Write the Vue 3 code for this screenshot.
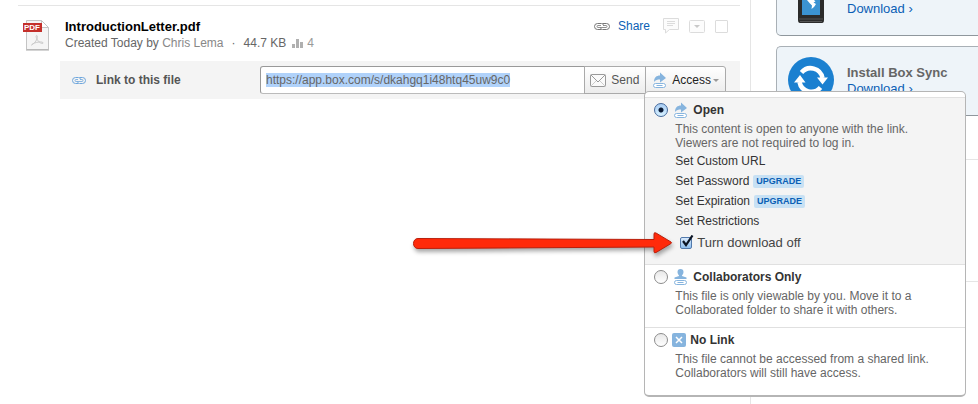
<script setup>
import { onMounted, ref } from 'vue'

const url = ref('https://app.box.com/s/dkahgq1i48htq45uw9c0')
const urlField = ref(null)
const access = ref('open')
const downloadOff = ref(true)
const rowSelected = ref(false)
const settings = [
  { label: 'Set Custom URL', upgrade: false },
  { label: 'Set Password', upgrade: true },
  { label: 'Set Expiration', upgrade: true },
  { label: 'Set Restrictions', upgrade: false }
]

onMounted(() => {
  urlField.value.focus()
  urlField.value.select()
})
</script>

<template>
  <div class="page">
    <main class="files">
      <article class="file">
        <svg class="pdf" width="28" height="32" viewBox="0 0 28 32" aria-hidden="true">
          <path d="M4.500 1.500H19.500L26.500 8.500V30.500H4.500Z" fill="#f5f5f5" stroke="#c4c4c4" />
          <path d="M4 31H27" stroke="#aaa" />
          <path d="M19.500 1.500V8.500H26.500Z" fill="#fff" stroke="#c4c4c4" />
          <path d="M9.500 26C13 24 15.500 20.500 15.300 17.500C15 15.500 13.700 16.500 14.300 18.500C15.300 21.500 18 24.500 20.500 24.500C22.500 24 20 22.500 17 23C14 23.300 10.500 24.500 9.500 26Z" fill="none" stroke="#c9c9c9" />
          <rect x="1" y="4" width="19" height="9" fill="#c4302b" />
          <text x="2" y="11" class="pdf-label">PDF</text>
        </svg>
        <div class="info">
          <h2 class="name">IntroductionLetter.pdf</h2>
          <p class="meta">
            <span>Created Today by <a href="#" class="owner">Chris Lema</a></span>
            <span class="dot">·</span>
            <span class="size">44.7 KB</span>
            <svg width="11" height="9" viewBox="0 0 11 9" aria-hidden="true"><path d="M0 5h3v4H0zM4 0h3v9H4zM8 3h3v6H8z" fill="#b0b0b0" /></svg>
            <span class="views">4</span>
          </p>
        </div>
        <div class="tools">
          <svg width="16" height="7" viewBox="0 0 16 7" fill="none" stroke="#777" aria-hidden="true">
            <path d="M7.500.5H3.500a3 3 0 0 0 0 6H7.500M8.500.5h4a3 3 0 0 1 0 6H8.500" /><path d="M7 2.500H4a1 1 0 0 0 0 2h8a1 1 0 0 0 0-2H9M7.500.5q2 0 2 2M8.500 6.500q-2 0-2-2" stroke-width=".8" />
          </svg>
          <a href="#" class="share">Share</a>
          <button class="tool" aria-label="Comment">
            <svg width="16" height="16" viewBox="0 0 16 16" fill="none" stroke="#dcdcdc"><path d="M.5.5h15v11H6.500L2.500 15v-3.500h-2Z" fill="#fcfcfc" /><path d="M4 3.500h8M4 5.500h8M4 7.500h6" /></svg>
          </button>
          <button class="tool" aria-label="More actions">
            <svg width="16" height="13" viewBox="0 0 16 13"><rect x=".5" y=".5" width="15" height="12" rx="1" fill="#fcfcfc" stroke="#dcdcdc" /><path d="M5 5h6L8 8z" fill="#c8c8c8" /></svg>
          </button>
          <input v-model="rowSelected" type="checkbox" class="pick" aria-label="Select file" />
        </div>
      </article>

      <section class="linkbar">
        <svg width="14" height="7" viewBox="0 0 14 7" fill="none" stroke="#6ea6dc" aria-hidden="true">
          <path d="M6.500.5h-3a3 3 0 0 0 0 6h3M7.500.5h3a3 3 0 0 1 0 6h-3" /><path d="M6 2.500H4a1 1 0 0 0 0 2h6a1 1 0 0 0 0-2H8M6.500.5q2 0 2 2M7.500 6.500q-2 0-2-2" stroke-width=".8" />
        </svg>
        <label for="link" class="linklabel">Link to this file</label>
        <div class="group">
          <input id="link" ref="urlField" v-model="url" type="text" class="url" spellcheck="false" />
          <button class="btn">
            <svg width="16" height="13" viewBox="0 0 16 13" fill="#fafafa" stroke="#999" aria-hidden="true"><rect x=".5" y=".5" width="15" height="12" rx="1" /><path d="M1 1l7 7 7-7" fill="none" /><path d="M1 12l5-5M15 12l-5-5" fill="none" stroke="#ccc" /></svg>
            Send
          </button>
          <div class="access">
            <button class="btn last" aria-expanded="true">
              <svg width="13" height="16" viewBox="0 0 13 16" aria-hidden="true"><path d="M1 10C1 5.500 3.500 3.500 7 3.500V.5L13 6 7 10.500V7.500C4.500 7.500 2.500 8 1 10Z" fill="#86b4de" /><rect x=".5" y="11.500" width="12" height="4" rx="2" fill="#fff" stroke="#86b4de" /><path d="M3.500 13.500h6" stroke="#86b4de" /></svg>
              <span>Access</span>
              <svg class="caret" width="6" height="3" viewBox="0 0 6 3" aria-hidden="true"><path d="M0 0h6L3 3z" fill="#999" /></svg>
            </button>

            <div class="popup">
              <section class="option open">
                <label class="choice">
                  <input v-model="access" type="radio" name="access" value="open" />
                  <svg width="13" height="16" viewBox="0 0 13 16" aria-hidden="true"><path d="M1 10C1 5.500 3.500 3.500 7 3.500V.5L13 6 7 10.500V7.500C4.500 7.500 2.500 8 1 10Z" fill="#86b4de" /><rect x=".5" y="11.500" width="12" height="4" rx="2" fill="#fff" stroke="#86b4de" /><path d="M3.500 13.500h6" stroke="#86b4de" /></svg>
                  <b>Open</b>
                </label>
                <p class="desc">This content is open to anyone with the link.<br />Viewers are not required to log in.</p>
                <ul class="settings">
                  <li v-for="s in settings" :key="s.label">
                    <a href="#">{{ s.label }}</a>
                    <span v-if="s.upgrade" class="badge">UPGRADE</span>
                  </li>
                </ul>
                <div class="restrict">
                  <label class="download">
                    <span class="tick">
                      <input v-model="downloadOff" type="checkbox" />
                      <svg v-if="downloadOff" class="mark" width="14" height="14" viewBox="0 0 14 14" aria-hidden="true"><path d="M3 6l3 4 6.500-9.500" fill="none" stroke="#0c1626" stroke-width="2.200" /></svg>
                    </span>
                    Turn download off
                  </label>
                  <svg class="arrow" width="264" height="28" viewBox="0 0 264 28" aria-hidden="true">
                    <path d="M8 6.500C2 6.500 2 16.500 8 16.500L244 15V19.500Q244 21.500 246 20.500L261 11.500Q262 11 261 10L246 1Q244 0 244 2V7.500Z" fill="#ff2a0a" stroke="#b91f0c" />
                  </svg>
                </div>
              </section>
              <section class="option collab">
                <label class="choice">
                  <input v-model="access" type="radio" name="access" value="collaborators" />
                  <svg width="13" height="16" viewBox="0 0 13 16" aria-hidden="true"><path d="M6.500 0a3 3 0 0 1 3 3c0 1.500-.8 2.500-1.500 3.500V7l4.500 1.500V10H.5V8.500L5 7V6.500C4.300 5.500 3.500 4.500 3.500 3a3 3 0 0 1 3-3Z" fill="#86b4de" /><rect x=".5" y="11.500" width="12" height="4" rx="2" fill="#fff" stroke="#86b4de" /><path d="M3.500 13.500h6" stroke="#86b4de" /></svg>
                  <b>Collaborators Only</b>
                </label>
                <p class="desc">This file is only viewable by you. Move it to a<br />Collaborated folder to share it with others.</p>
              </section>
              <section class="option nolink">
                <label class="choice tight">
                  <input v-model="access" type="radio" name="access" value="none" />
                  <svg width="14" height="14" viewBox="0 0 14 14" aria-hidden="true"><rect width="14" height="14" rx="2" fill="#86b4de" /><path d="M4 4l6 6M10 4l-6 6" stroke="#fff" stroke-width="1.500" /></svg>
                  <b>No Link</b>
                </label>
                <p class="desc">This file cannot be accessed from a shared link.<br />Collaborators will still have access.</p>
              </section>
            </div>
          </div>
        </div>
      </section>
    </main>

    <aside class="side">
      <section class="card first">
        <svg class="phone" width="28" height="24" viewBox="0 0 28 24" aria-hidden="true">
          <path d="M1 0H27V20Q27 23 25 23H3Q1 23 1 20Z" fill="#2b2b2b" />
          <path d="M2 19H26M3 21.500H25" stroke="#555" />
          <path d="M5 0H23V15H5Z" fill="#3b93d2" />
          <path d="M10 0H17L18.500 1.500 16.500 2.500 19 4 17 7 14.500 9 15 5.500 12.500 3Z" fill="#fff" />
        </svg>
        <a href="#" class="dl">Download ›</a>
      </section>
      <section class="card second">
        <svg class="sync" width="46" height="46" viewBox="0 0 46 46" aria-hidden="true">
          <circle cx="23" cy="23" r="23" fill="#1b80d0" />
          <path d="M13.500 15.500A12 12 0 0 1 34.500 21M32.500 30.500A12 12 0 0 1 11.500 25" fill="none" stroke="#fff" stroke-width="4.500" />
          <path d="M29 20.500H40L34.500 27.500ZM6 25.500H17.500L12 18Z" fill="#fff" />
        </svg>
        <div>
          <h3 class="title">Install Box Sync</h3>
          <a href="#" class="dl">Download ›</a>
        </div>
      </section>
      <div class="block"></div>
      <div class="block low"></div>
    </aside>
  </div>
</template>

<style>
body {
  background: #fff;
}
</style>

<style scoped>
* {
  box-sizing: border-box;
}
.page {
  display: flex;
  min-height: 100vh;
  font: 12px/14px "Liberation Sans", Arial, sans-serif;
  color: #666;
}
h2, h3, p, ul {
  margin: 0;
  padding: 0;
}
a {
  text-decoration: none;
  color: inherit;
}
button {
  font: inherit;
  margin: 0;
}
svg {
  display: block;
  flex: none;
}
.files {
  flex: 1;
  min-width: 0;
  padding: 5px 10px 0 18px;
}
.file {
  display: flex;
  align-items: flex-start;
  height: 56px;
  padding: 13px 4px 0 4px;
  border-top: 1px solid #e5e5e5;
}
.pdf-label {
  font: bold 8px "Liberation Sans", Arial, sans-serif;
  fill: #fff;
}
.info {
  flex: 1;
  padding: 0 0 0 15px;
}
.name {
  font-size: 13px;
  line-height: 16px;
  color: #000;
}
.meta {
  display: flex;
  align-items: center;
  line-height: 16px;
}
.owner {
  color: #888;
}
.dot {
  margin: 0 8px;
}
.size {
  margin-right: 6px;
}
.views {
  margin-left: 4px;
  color: #999;
}
.tools {
  display: flex;
  align-items: center;
  height: 14px;
}
.share {
  margin: 0 13px 0 8px;
  color: #0b5fb5;
}
.tool {
  padding: 0;
  margin-right: 10px;
  border: 0;
  background: none;
}
.pick {
  appearance: none;
  width: 13px;
  height: 13px;
  margin: 0 8px 0 0;
  border: 1px solid #dcdcdc;
  border-radius: 1px;
  background: #fff;
}
.linkbar {
  display: flex;
  align-items: center;
  height: 38px;
  margin-left: 42px;
  padding: 0 14px 0 12px;
  background: #f4f4f4;
}
.linklabel {
  width: 174px;
  padding-left: 10px;
  font-weight: bold;
  color: #555;
}
.group {
  display: flex;
  flex: 1;
}
.url {
  flex: 1;
  min-width: 0;
  height: 28px;
  padding: 0 5px;
  border: 1px solid #999;
  border-bottom-color: #bbb;
  border-radius: 3px 0 0 3px;
  outline: 0;
  font: inherit;
  color: #666;
  background: #fff;
}
.url::selection {
  color: #666;
  background: #b0d2fa;
}
.btn {
  display: flex;
  align-items: center;
  gap: 5px;
  height: 28px;
  padding: 0 6px 0 5px;
  margin-left: -1px;
  border: 1px solid #aaa;
  color: #555;
  background: linear-gradient(#fff, #ececec);
}
.last {
  gap: 6px;
  padding: 0 6px 0 7px;
  border-radius: 0 3px 3px 0;
  color: #222;
}
.caret {
  margin-left: -4px;
}
.access {
  position: relative;
}
.popup {
  position: absolute;
  z-index: 2;
  top: 25px;
  left: -2px;
  width: 322px;
  padding-top: 5px;
  border: 1px solid #b5b5b5;
  border-bottom-width: 2px;
  border-radius: 5px;
  background: #fff;
}
.option {
  padding: 4px 9px 0;
  border-top: 1px solid #e0e0e0;
}
.open {
  height: 167px;
  background: #f4f4f4;
}
.collab {
  height: 63px;
}
.nolink {
  height: 68px;
}
.choice {
  display: flex;
  align-items: center;
  gap: 6px;
  height: 16px;
  color: #333;
}
.tight {
  gap: 4px;
}
.choice input {
  appearance: none;
  width: 14px;
  height: 14px;
  margin: 0;
  border: 1px solid #8c8c8c;
  border-radius: 50%;
  background: linear-gradient(#e8e8e8, #fff);
}
.choice input:checked {
  border-color: #45699c;
  background: radial-gradient(circle, #0a1a35 0 2px, transparent 3px), linear-gradient(#a9cdf4, #d5f0ff);
}
.desc {
  padding: 4px 0 0 21px;
}
.settings {
  padding: 1px 0 0 21px;
  list-style: none;
  color: #333;
}
.settings li {
  display: flex;
  align-items: center;
  height: 20px;
}
.badge {
  margin-left: 4px;
  padding: 0 3px;
  border-radius: 2px;
  font-size: 9px;
  font-weight: bold;
  line-height: 13px;
  color: #0b5fb5;
  background: #c8e1f4;
}
.restrict {
  position: relative;
  padding: 4px 0 0 26px;
}
.download {
  display: flex;
  align-items: center;
  gap: 5px;
  font-size: 13px;
  line-height: 16px;
  color: #444;
}
.tick {
  position: relative;
}
.tick input {
  display: block;
  appearance: none;
  width: 12px;
  height: 12px;
  margin: 0;
  border: 1px solid #5279ab;
  border-radius: 2px;
  background: linear-gradient(#d8e9fb, #8fc0f0);
}
.mark {
  position: absolute;
  top: -2px;
  left: 0;
  pointer-events: none;
}
.arrow {
  position: absolute;
  top: 1px;
  right: 100%;
  margin-right: -20px;
  filter: drop-shadow(1px 3px 2px rgba(0, 0, 0, 0.35));
}
.side {
  width: 228px;
  padding-left: 25px;
  border-left: 1px solid #e5e5e5;
}
.card {
  display: flex;
  border: 1px solid #a9b0b6;
  border-right: 0;
  border-bottom-color: #8f979d;
  background: #eef4f9;
}
.first {
  height: 36px;
  padding-left: 20px;
  border-top: 0;
  border-radius: 0 0 0 5px;
}
.first .dl {
  margin: 1px 0 0 22px;
}
.second {
  height: 70px;
  margin-top: 10px;
  padding: 10px 0 0 11px;
  border-radius: 5px 0 0 5px;
  gap: 13px;
}
.title {
  padding-top: 8px;
  font-size: 13px;
  line-height: 16px;
  color: #666;
}
.dl {
  font-size: 13px;
  line-height: 16px;
  color: #0b5fb5;
}
.block {
  height: 122px;
  margin: 43px 0 0 -25px;
  border-top: 1px solid #e5e5e5;
}
.low {
  margin-top: 0;
}
</style>
